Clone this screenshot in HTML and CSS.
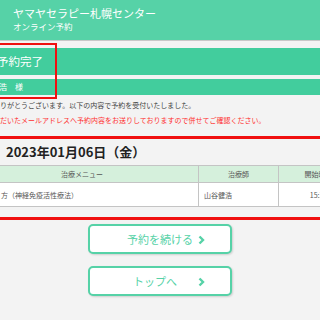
FILE: index.html
```html
<!DOCTYPE html>
<html lang="ja">
<head>
    <meta charset="UTF-8">
    <meta name="viewport" content="width=device-width, initial-scale=1.0">
    <title>予約完了</title>
    <link rel="stylesheet" href="styles.css">
</head>
<body>
    <header class="site-header">
        <div class="site-title">ヤマヤセラピー札幌センター</div>
        <div class="site-sub">オンライン予約</div>
    </header>

    <main class="content">
        <div class="done-band">予約完了</div>
        <div class="name-band">浩　様</div>

        <p class="msg">りがとうございます。以下の内容で予約を受付いたしました。</p>
        <p class="msg msg-red">だいたメールアドレスへ予約内容をお送りしておりますので併せてご確認ください。</p>

        <section class="booking">
            <div class="booking-date">2023年01月06日（金）</div>
            <table class="booking-table">
                <tr>
                    <th class="col-menu">治療メニュー</th>
                    <th class="col-staff">治療師</th>
                    <th class="col-time">開始時間</th>
                </tr>
                <tr>
                    <td class="col-menu">方（神経免疫活性療法）</td>
                    <td class="col-staff">山谷健浩</td>
                    <td class="col-time">15:30</td>
                </tr>
            </table>
        </section>

        <div class="actions">
            <a href="#" class="btn">予約を続ける
                <svg class="chev" width="7" height="10" viewBox="0 0 7 10"><polyline points="1.5,1.5 5,5 1.5,8.5" fill="none" stroke="currentColor" stroke-width="2.4"/></svg>
            </a>
            <a href="#" class="btn btn-top">トップへ
                <svg class="chev" width="7" height="10" viewBox="0 0 7 10"><polyline points="1.5,1.5 5,5 1.5,8.5" fill="none" stroke="currentColor" stroke-width="2.4"/></svg>
            </a>
        </div>
    </main>

    <!-- 赤枠の注記 -->
    <div class="mark mark-title"></div>
    <div class="mark mark-booking"></div>
</body>
</html>
```

FILE: styles.css
```css
body {
    margin: 0;
    width: 320px;
    height: 320px;
    overflow: hidden;
    position: relative;
    background-color: #f3f3f3;
    font-family: "Noto Sans CJK JP", "Noto Sans", sans-serif;
    color: #444;
}
.site-header {
    height: 40px;
    background: #56d2a7;
    border-bottom: 1px solid #c8c8c8;
    padding-left: 13px;
    color: white;
}
.site-title {
    padding-top: 6px;
    font-size: 11px;
    line-height: 14px;
}
.site-sub {
    font-size: 8.5px;
    line-height: 12px;
}
.content {
    padding-top: 7px;
}
.done-band {
    height: 27px;
    line-height: 27px;
    background: #42cd9d;
    color: white;
    font-size: 11.5px;
    text-indent: -3px;
}
.name-band {
    margin-top: 4px;
    height: 16px;
    line-height: 16px;
    background: #42cd9d;
    color: white;
    font-size: 8px;
    text-indent: -1px;
}
.msg {
    margin: 0;
    font-size: 7px;
    line-height: 10px;
    white-space: nowrap;
}
.msg:first-of-type {
    margin-top: 5px;
}
.msg-red {
    margin-top: 5px;
    color: #ff3030;
}
.booking {
    margin-top: 14px;
}
.booking-date {
    height: 26px;
    line-height: 26px;
    padding-left: 6px;
    font-size: 13px;
    font-weight: bold;
    color: #222;
}
.booking-table {
    margin-left: -35px;
    width: 390px;
    table-layout: fixed;
    border-collapse: collapse;
    font-size: 7px;
    color: #555;
}
.booking-table th {
    height: 16px;
    background: #d5f0dc;
    font-weight: normal;
    border: 1px solid #c4c4c4;
    padding: 0;
}
.booking-table td {
    height: 23px;
    background: white;
    border: 1px solid #c4c4c4;
    padding: 0 5px;
}
.col-menu {
    width: 232px;
}
.col-staff {
    width: 79px;
}
.col-time {
    width: 79px;
    text-align: center;
}
.booking-table td.col-menu {
    padding-left: 35px;
}
.actions {
    margin-top: 17px;
    display: flex;
    flex-direction: column;
    align-items: center;
    gap: 12px;
}
.btn {
    position: relative;
    box-sizing: border-box;
    width: 144px;
    height: 30px;
    display: flex;
    align-items: center;
    justify-content: center;
    background: white;
    border: 2px solid #56d2a7;
    border-radius: 5px;
    box-shadow: 1px 1px 2px rgba(0, 0, 0, 0.15);
    color: #56d2a7;
    font-size: 11px;
    text-decoration: none;
}
.btn-top {
    padding-right: 10px;
}
.chev {
    position: absolute;
    right: 25px;
    top: 9px;
}
.mark {
    position: absolute;
    border: 2px solid #f01010;
}
.mark-title {
    left: -10px;
    top: 43px;
    width: 63px;
    height: 52px;
}
.mark-booking {
    left: -10px;
    top: 136px;
    width: 336px;
    height: 78px;
    border-width: 3px;
}
```
